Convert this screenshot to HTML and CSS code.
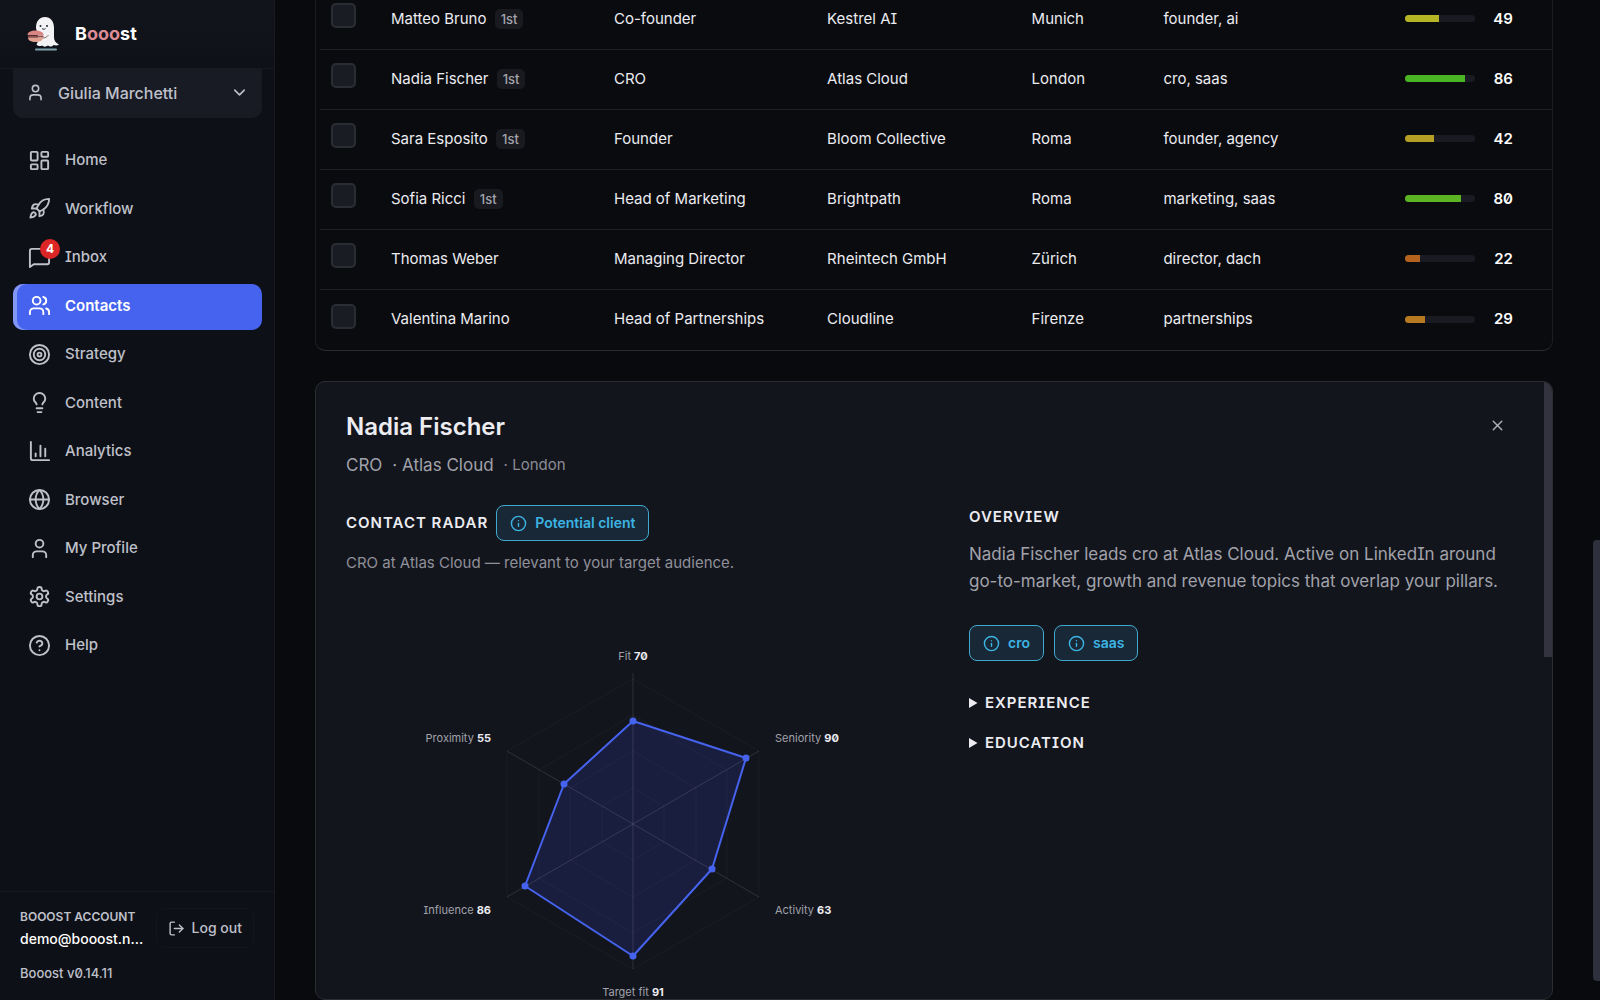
FILE: index.html
```html
<!DOCTYPE html>
<html lang="en">
<head>
    <meta charset="utf-8">
    <title>Booost - Contacts</title>

    <link rel="stylesheet" href="styles.css">
</head>
<body>
    <aside class="sidebar">
        <div class="brand">
            <svg class="brand-logo" viewBox="0 0 34 36" aria-hidden="true">
                <path d="M10 33.500h20" stroke="#7fa5ab" stroke-width="2" stroke-linecap="round" />
                <path d="M10 12C10 5 13.500 1 19 1s9 4 9 11v9c0 4 2 6 5 7.500-2 1.500-4 1-5.500.5-1.500 2-4 2-5.500.5-2 1.500-4.500 1.500-6 0-2 1-4.500.5-5.500-1 1.500-2 1.500-5 1.500-8z" fill="#f3f3f5" />
                <circle cx="14.500" cy="10" r="1" fill="#23252d" />
                <circle cx="21" cy="10" r="1" fill="#23252d" />
                <path d="M16 12.500c1 1 2.500 1 3.500 0" fill="none" stroke="#23252d" />
                <path d="M17 22c2 0 4-1 5.500-3" fill="none" stroke="#8b6a61" />
                <path d="M1.500 19c0-3 3.500-4.500 8-4.500s8 1.500 8 4.500z" fill="#d98583" />
                <path d="M2 19.500h15.500v2H2z" fill="#8f4d49" />
                <path d="M2 21.500h15c0 3-3 4.500-7.500 4.500S2 24.500 2 21.500z" fill="#e0a08f" />
            </svg>
            <span class="brand-name">B<span class="brand-ooo">ooo</span>st</span>
        </div>

        <button type="button" class="account-switch">
            <svg class="icon icon-small" viewBox="0 0 24 24"><path d="M19 21v-2a4 4 0 0 0-4-4H9a4 4 0 0 0-4 4v2" /><circle cx="12" cy="7" r="4" /></svg>
            <span class="account-name">Giulia Marchetti</span>
            <svg class="icon icon-small" viewBox="0 0 24 24"><path d="m6 9 6 6 6-6" /></svg>
        </button>

        <nav class="nav">
            <a href="#" class="nav-item">
                <svg class="icon" viewBox="0 0 24 24"><rect x="3" y="3" width="7" height="9" rx="1" /><rect x="14" y="3" width="7" height="5" rx="1" /><rect x="14" y="12" width="7" height="9" rx="1" /><rect x="3" y="16" width="7" height="5" rx="1" /></svg>
                Home
            </a>
            <a href="#" class="nav-item">
                <svg class="icon" viewBox="0 0 24 24"><path d="M4.500 16.500c-1.500 1.260-2 5-2 5s3.740-.5 5-2c.71-.84.7-2.130-.09-2.910a2.180 2.180 0 0 0-2.910-.09z" /><path d="m12 15-3-3a22 22 0 0 1 2-3.950A12.880 12.880 0 0 1 22 2c0 2.720-.78 7.500-6 11a22.350 22.350 0 0 1-4 2z" /><path d="M9 12H4s.55-3.030 2-4c1.620-1.080 5 0 5 0" /><path d="M12 15v5s3.030-.55 4-2c1.080-1.620 0-5 0-5" /></svg>
                Workflow
            </a>
            <a href="#" class="nav-item">
                <svg class="icon" viewBox="0 0 24 24"><path d="M22 4v13a2 2 0 0 1-2 2H6l-4 3V5a2 2 0 0 1 2-2h16a2 2 0 0 1 2 2z" /></svg>
                <span class="badge">4</span>
                Inbox
            </a>
            <a href="#" class="nav-item active">
                <svg class="icon" viewBox="0 0 24 24"><path d="M16 21v-2a4 4 0 0 0-4-4H6a4 4 0 0 0-4 4v2" /><circle cx="9" cy="7" r="4" /><path d="M22 21v-2a4 4 0 0 0-3-3.870" /><path d="M16 3.130a4 4 0 0 1 0 7.750" /></svg>
                Contacts
            </a>
            <a href="#" class="nav-item">
                <svg class="icon" viewBox="0 0 24 24"><circle cx="12" cy="12" r="10" /><circle cx="12" cy="12" r="6" /><circle cx="12" cy="12" r="2" /></svg>
                Strategy
            </a>
            <a href="#" class="nav-item">
                <svg class="icon" viewBox="0 0 24 24"><path d="M15 14c.2-1 .7-1.700 1.500-2.500 1-.9 1.500-2.200 1.500-3.500A6 6 0 0 0 6 8c0 1 .2 2.200 1.500 3.500.7.7 1.300 1.500 1.500 2.500" /><path d="M9 18h6" /><path d="M10 22h4" /></svg>
                Content
            </a>
            <a href="#" class="nav-item">
                <svg class="icon" viewBox="0 0 24 24"><path d="M3 2v17a2 2 0 0 0 2 2h17" /><path d="M8 17v-3" /><path d="M13 17V6" /><path d="M18 17V9" /></svg>
                Analytics
            </a>
            <a href="#" class="nav-item">
                <svg class="icon" viewBox="0 0 24 24"><circle cx="12" cy="12" r="10" /><path d="M12 2a14.500 14.500 0 0 0 0 20 14.500 14.500 0 0 0 0-20" /><path d="M2 12h20" /></svg>
                Browser
            </a>
            <a href="#" class="nav-item">
                <svg class="icon" viewBox="0 0 24 24"><path d="M19 21v-2a4 4 0 0 0-4-4H9a4 4 0 0 0-4 4v2" /><circle cx="12" cy="7" r="4" /></svg>
                My Profile
            </a>
            <a href="#" class="nav-item">
                <svg class="icon" viewBox="0 0 24 24"><path d="M12.220 2h-.44a2 2 0 0 0-2 2v.18a2 2 0 0 1-1 1.730l-.43.25a2 2 0 0 1-2 0l-.15-.08a2 2 0 0 0-2.730.73l-.22.38a2 2 0 0 0 .73 2.730l.15.1a2 2 0 0 1 1 1.720v.51a2 2 0 0 1-1 1.740l-.15.09a2 2 0 0 0-.73 2.730l.22.38a2 2 0 0 0 2.730.73l.15-.08a2 2 0 0 1 2 0l.43.25a2 2 0 0 1 1 1.730V20a2 2 0 0 0 2 2h.44a2 2 0 0 0 2-2v-.18a2 2 0 0 1 1-1.730l.43-.25a2 2 0 0 1 2 0l.15.08a2 2 0 0 0 2.730-.73l.22-.39a2 2 0 0 0-.73-2.730l-.15-.08a2 2 0 0 1-1-1.740v-.5a2 2 0 0 1 1-1.740l.15-.09a2 2 0 0 0 .73-2.730l-.22-.38a2 2 0 0 0-2.730-.73l-.15.08a2 2 0 0 1-2 0l-.43-.25a2 2 0 0 1-1-1.730V4a2 2 0 0 0-2-2z" /><circle cx="12" cy="12" r="3" /></svg>
                Settings
            </a>
            <a href="#" class="nav-item">
                <svg class="icon" viewBox="0 0 24 24"><circle cx="12" cy="12" r="10" /><path d="M9.090 9a3 3 0 0 1 5.830 1c0 2-3 3-3 3" /><path d="M12 17h.01" /></svg>
                Help
            </a>
        </nav>

        <div class="sidebar-footer">
            <div class="footer-row">
                <div class="footer-account">
                    <div class="footer-label">BOOOST ACCOUNT</div>
                    <div class="footer-email">demo@booost.network</div>
                </div>
                <button type="button" class="logout">
                    <svg class="icon icon-tiny" viewBox="0 0 24 24"><path d="M9 21H5a2 2 0 0 1-2-2V5a2 2 0 0 1 2-2h4" /><path d="m16 17 5-5-5-5" /><path d="M21 12H9" /></svg>
                    Log out
                </button>
            </div>
            <div class="version">Booost v0.14.11</div>
        </div>
    </aside>

    <main class="main">
        <div class="table-wrap">
            <table class="contacts">
                <colgroup>
                    <col class="col-check">
                    <col class="col-name">
                    <col class="col-role">
                    <col class="col-company">
                    <col class="col-city">
                    <col class="col-tags">
                    <col class="col-score">
                </colgroup>
                <tbody>
                    <tr>
                        <td><input type="checkbox" aria-label="Select Matteo Bruno"></td>
                        <td>Matteo Bruno <span class="degree">1st</span></td>
                        <td>Co-founder</td>
                        <td>Kestrel AI</td>
                        <td>Munich</td>
                        <td>founder, ai</td>
                        <td><div class="score"><div class="bar"><div class="fill" style="width: 49%; background: #b5b526"></div></div><b>49</b></div></td>
                    </tr>
                    <tr>
                        <td><input type="checkbox" aria-label="Select Nadia Fischer"></td>
                        <td>Nadia Fischer <span class="degree">1st</span></td>
                        <td>CRO</td>
                        <td>Atlas Cloud</td>
                        <td>London</td>
                        <td>cro, saas</td>
                        <td><div class="score"><div class="bar"><div class="fill" style="width: 86%; background: #49b424"></div></div><b>86</b></div></td>
                    </tr>
                    <tr>
                        <td><input type="checkbox" aria-label="Select Sara Esposito"></td>
                        <td>Sara Esposito <span class="degree">1st</span></td>
                        <td>Founder</td>
                        <td>Bloom Collective</td>
                        <td>Roma</td>
                        <td>founder, agency</td>
                        <td><div class="score"><div class="bar"><div class="fill" style="width: 42%; background: #b59f24"></div></div><b>42</b></div></td>
                    </tr>
                    <tr>
                        <td><input type="checkbox" aria-label="Select Sofia Ricci"></td>
                        <td>Sofia Ricci <span class="degree">1st</span></td>
                        <td>Head of Marketing</td>
                        <td>Brightpath</td>
                        <td>Roma</td>
                        <td>marketing, saas</td>
                        <td><div class="score"><div class="bar"><div class="fill" style="width: 80%; background: #5ab423"></div></div><b>80</b></div></td>
                    </tr>
                    <tr>
                        <td><input type="checkbox" aria-label="Select Thomas Weber"></td>
                        <td>Thomas Weber</td>
                        <td>Managing Director</td>
                        <td>Rheintech GmbH</td>
                        <td>Zürich</td>
                        <td>director, dach</td>
                        <td><div class="score"><div class="bar"><div class="fill" style="width: 22%; background: #b5621f"></div></div><b>22</b></div></td>
                    </tr>
                    <tr>
                        <td><input type="checkbox" aria-label="Select Valentina Marino"></td>
                        <td>Valentina Marino</td>
                        <td>Head of Partnerships</td>
                        <td>Cloudline</td>
                        <td>Firenze</td>
                        <td>partnerships</td>
                        <td><div class="score"><div class="bar"><div class="fill" style="width: 29%; background: #b87a20"></div></div><b>29</b></div></td>
                    </tr>
                </tbody>
            </table>
        </div>

        <section class="detail">
            <header class="detail-header">
                <div>
                    <h2>Nadia Fischer</h2>
                    <p class="meta"><span>CRO</span><span>· Atlas Cloud</span><span class="meta-city">· London</span></p>
                </div>
                <button type="button" class="close" aria-label="Close">
                    <svg class="icon icon-tiny" viewBox="0 0 24 24"><path d="M18 6 6 18" /><path d="m6 6 12 12" /></svg>
                </button>
            </header>

            <div class="detail-grid">
                <div>
                    <div class="radar-title">
                        <h3>CONTACT RADAR</h3>
                        <span class="pill"><svg class="icon icon-tiny" viewBox="0 0 24 24"><circle cx="12" cy="12" r="10" /><path d="M12 16v-4" /><path d="M12 8h.01" /></svg>Potential client</span>
                    </div>
                    <p class="radar-note">CRO at Atlas Cloud — relevant to your target audience.</p>

                    <svg class="radar" viewBox="0 0 440 380" width="440" height="380" role="img" aria-label="Contact radar">
                        <g class="radar-grid">
                            <polygon points="220,154 251,172 251,208 220,226 189,208 189,172" />
                            <polygon points="220,117 283,154 283,226 220,263 157,226 157,154" />
                            <polygon points="220,81 314,136 314,244 220,299 126,244 126,136" />
                            <polygon points="220,45 346,117 346,263 220,335 94,263 94,117" />
                        </g>
                        <polygon class="radar-area" points="220,87 333,124 299,235 220,322 112,252 151,150" />
                        <g class="radar-axes">
                            <path d="M220 39V335" />
                            <path d="M94 117 346 263" />
                            <path d="M346 117 94 263" />
                        </g>
                        <g class="radar-dots">
                            <circle cx="220" cy="87" r="3.500" />
                            <circle cx="333" cy="124" r="3.500" />
                            <circle cx="299" cy="235" r="3.500" />
                            <circle cx="220" cy="322" r="3.500" />
                            <circle cx="112" cy="252" r="3.500" />
                            <circle cx="151" cy="150" r="3.500" />
                        </g>
                        <g class="radar-labels">
                            <text x="220" y="26" text-anchor="middle">Fit <tspan>70</tspan></text>
                            <text x="362" y="108">Seniority <tspan>90</tspan></text>
                            <text x="362" y="280">Activity <tspan>63</tspan></text>
                            <text x="220" y="362" text-anchor="middle">Target fit <tspan>91</tspan></text>
                            <text x="78" y="280" text-anchor="end">Influence <tspan>86</tspan></text>
                            <text x="78" y="108" text-anchor="end">Proximity <tspan>55</tspan></text>
                        </g>
                    </svg>
                </div>

                <div>
                    <h3>OVERVIEW</h3>
                    <p class="overview">Nadia Fischer leads cro at Atlas Cloud. Active on LinkedIn around go-to-market, growth and revenue topics that overlap your pillars.</p>
                    <div class="pills">
                        <span class="pill"><svg class="icon icon-tiny" viewBox="0 0 24 24"><circle cx="12" cy="12" r="10" /><path d="M12 16v-4" /><path d="M12 8h.01" /></svg>cro</span>
                        <span class="pill"><svg class="icon icon-tiny" viewBox="0 0 24 24"><circle cx="12" cy="12" r="10" /><path d="M12 16v-4" /><path d="M12 8h.01" /></svg>saas</span>
                    </div>
                    <details>
                        <summary>EXPERIENCE</summary>
                    </details>
                    <details>
                        <summary>EDUCATION</summary>
                    </details>
                </div>
            </div>
            <div class="detail-thumb"></div>
        </section>
        <div class="page-thumb"></div>
    </main>
</body>
</html>
```

FILE: styles.css
```css
* {
    box-sizing: border-box;
}

body {
    margin: 0;
    height: 100vh;
    display: flex;
    overflow: hidden;
    background: #090a0e;
    color: #ececf1;
    font-family: Inter, "Noto Sans", sans-serif;
    font-size: 15px;
    line-height: 24px;
    font-feature-settings: "zero", "cv08";
}

h2, h3, p {
    margin: 0;
}

button {
    font: inherit;
    font-feature-settings: inherit;
    color: inherit;
    cursor: pointer;
}

.icon {
    width: 23px;
    height: 23px;
    flex: none;
    fill: none;
    stroke: currentColor;
    stroke-width: 2;
    stroke-linecap: round;
    stroke-linejoin: round;
}

.icon-small {
    width: 19px;
    height: 19px;
}

.icon-tiny {
    width: 17px;
    height: 17px;
}

/* sidebar */

.sidebar {
    width: 275px;
    flex: none;
    display: flex;
    flex-direction: column;
    background: linear-gradient(#12151c, #0e1017 80px);
    border-right: 1px solid #17191f;
    color: #bfc0ca;
}

.brand {
    height: 69px;
    flex: none;
    display: flex;
    align-items: center;
    gap: 15px;
    padding: 0 26px;
    border-bottom: 1px solid #171920;
}

.brand-logo {
    width: 34px;
    height: 36px;
    fill: none;
}

.brand-name {
    font-size: 18px;
    font-weight: 700;
    color: #fff;
}

.brand-ooo {
    color: #dd8b97;
}

.account-switch {
    height: 49px;
    flex: none;
    margin: 0 12px 0 13px;
    padding: 0 13px 2px;
    display: flex;
    align-items: center;
    gap: 13px;
    background: #191b24;
    border: none;
    border-radius: 0 0 10px 10px;
    font-size: 16px;
    font-weight: 500;
    text-align: left;
}

.account-name {
    flex: 1;
}

.nav {
    height: 531px;
    margin: 20px 12px 0 13px;
    display: grid;
    align-content: space-between;
}

.nav-item {
    position: relative;
    height: 46px;
    display: flex;
    align-items: center;
    gap: 14px;
    padding: 0 0 2px 15px;
    border-radius: 10px;
    color: inherit;
    font-weight: 500;
    text-decoration: none;
}

.nav-item.active {
    background: #4563ee;
    box-shadow: inset 4px 0 #8296f4;
    color: #fff;
    font-weight: 600;
}

.badge {
    position: absolute;
    top: 4px;
    left: 27px;
    width: 20px;
    height: 20px;
    border-radius: 50%;
    background: #dc2626;
    color: #fff;
    font-size: 12px;
    font-weight: 700;
    line-height: 20px;
    text-align: center;
}

.sidebar-footer {
    margin-top: auto;
    padding: 14px 20px 15px;
    border-top: 1px solid #171920;
}

.footer-row {
    display: flex;
    align-items: center;
    gap: 12px;
}

.footer-account {
    flex: 1;
    min-width: 0;
    line-height: 22px;
}

.footer-label {
    font-size: 12px;
    font-weight: 600;
    white-space: nowrap;
}

.footer-email {
    overflow: hidden;
    color: #fff;
    font-size: 14px;
    font-weight: 500;
    text-overflow: ellipsis;
}

.logout {
    height: 40px;
    display: flex;
    align-items: center;
    gap: 7px;
    padding: 0 11px;
    background: none;
    border: 1px solid #13151c;
    border-radius: 8px;
    font-size: 14px;
    font-weight: 500;
    white-space: nowrap;
}

.version {
    margin-top: 11px;
    font-size: 13px;
    font-weight: 500;
}

/* contacts list, scrolled to its end */

.main {
    position: relative;
    flex: 1;
    min-width: 0;
    display: flex;
    flex-direction: column;
    justify-content: flex-end;
    gap: 30px;
    padding: 0 47px 0 40px;
}

.table-wrap {
    flex: none;
    padding-left: 4px;
    border: 1px solid #1c1d22;
    border-bottom-color: #2a2b2f;
    border-radius: 10px;
    background: #0a0b0f;
}

.contacts {
    width: 100%;
    table-layout: fixed;
    border-spacing: 0;
}

.col-check {
    width: 55px;
}

.col-name {
    width: 18.1%;
}

.col-role {
    width: 17.3%;
}

.col-company {
    width: 16.6%;
}

.col-city {
    width: 10.7%;
}

.col-tags {
    width: 19.6%;
}

.contacts td {
    height: 60px;
    padding: 0 16px 2px;
    border-bottom: 1px solid #1e1f24;
    white-space: nowrap;
}

.contacts tr:last-child td {
    border-bottom: none;
}

.contacts td:first-child {
    padding: 0 11px;
}

.contacts input {
    appearance: none;
    display: block;
    width: 25px;
    height: 25px;
    margin: 0 0 8px;
    background: #1a1c23;
    border: 2px solid #2b2d34;
    border-radius: 5px;
}

.degree {
    display: inline-block;
    margin-left: 4px;
    padding: 0 6px;
    background: #191a20;
    border-radius: 5px;
    color: #a3a4ad;
    font-size: 13px;
    font-weight: 500;
    line-height: 20px;
}

.score {
    display: flex;
    align-items: center;
    color: #fff;
}

.score b {
    width: 38px;
    font-weight: 600;
    text-align: right;
}

.bar {
    width: 70px;
    height: 7px;
    overflow: hidden;
    background: #1a1b22;
    border-radius: 4px;
}

.fill {
    height: 100%;
}

/* contact panel */

.detail {
    position: relative;
    flex: none;
    height: calc(62vh - 1px);
    overflow: hidden;
    padding: 29px 10px 0 30px;
    background: #13151d;
    border: 1px solid #2c2d31;
    border-radius: 10px;
}

.detail-header {
    display: flex;
    justify-content: space-between;
    align-items: flex-start;
    padding-right: 28px;
}

.detail h2 {
    font-size: 24px;
    font-weight: 600;
    line-height: 32px;
}

.meta {
    display: flex;
    gap: 10px;
    margin-top: 9px;
    color: #a1a2aa;
    font-size: 17px;
    line-height: 26px;
}

.meta-city {
    color: #8b8c95;
    font-size: 15px;
}

.close {
    width: 34px;
    height: 28px;
    display: grid;
    place-items: center;
    padding: 0;
    background: none;
    border: none;
    color: #b0b1b9;
}

.detail-grid {
    display: grid;
    grid-template-columns: 1fr 1fr;
    gap: 50px;
    margin-top: 27px;
}

.detail h3,
summary {
    font-size: 15px;
    font-weight: 600;
    line-height: 24px;
    letter-spacing: 1px;
}

.radar-title {
    display: flex;
    align-items: center;
    gap: 8px;
}

.pill {
    height: 36px;
    display: inline-flex;
    align-items: center;
    gap: 8px;
    padding: 0 13px;
    background: #192836;
    border: 1px solid #41a9cf;
    border-radius: 8px;
    color: #3cb4e4;
    font-size: 14px;
    font-weight: 600;
}

.radar-note {
    margin-top: 10px;
    color: #8f9099;
}

.radar {
    display: block;
    margin: 59px auto 0;
}

.radar-grid {
    fill: none;
    stroke: #1b1d25;
}

.radar-area {
    fill: rgba(69, 80, 238, 0.16);
    stroke: #4563ee;
    stroke-width: 2;
    stroke-linejoin: round;
}

.radar-axes {
    stroke: rgba(255, 255, 255, 0.12);
}

.radar-dots {
    fill: #4563ee;
}

.radar-labels {
    fill: #a1a2aa;
    font-size: 11px;
}

.radar-labels tspan {
    fill: #ececf1;
    font-weight: 700;
}

.overview {
    max-width: 544px;
    margin-top: 12px;
    color: #a1a2aa;
    font-size: 17px;
    line-height: 27px;
}

.pills {
    display: flex;
    gap: 10px;
    margin: 30px 0;
}

details {
    margin-top: 16px;
}

summary {
    cursor: pointer;
}

/* scrollbar thumbs */

.detail-thumb {
    position: absolute;
    top: 0;
    right: 0;
    width: 8px;
    height: 275px;
    background: #32333f;
}

.page-thumb {
    position: absolute;
    right: 0;
    top: 54%;
    bottom: 19px;
    width: 7px;
    background: #2f303d;
    border-radius: 4px 0 0 4px;
}
```
